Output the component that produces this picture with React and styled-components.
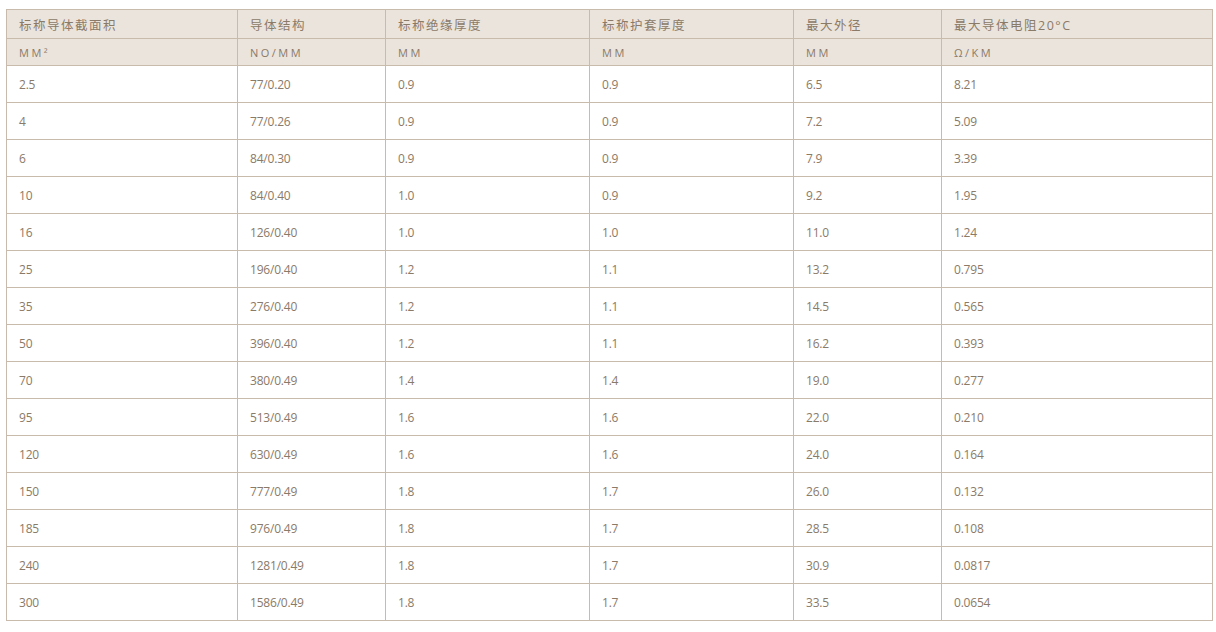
import React from "react";
import styled, { createGlobalStyle } from "styled-components";

const GlobalStyle = createGlobalStyle`
  body {
    margin: 0;
    background: #fff;
    font-family: "Open Sans", "Noto Sans CJK SC", sans-serif;
  }
`;

const columns = [
  { title: "标称导体截面积", unit: "MM²", width: 231 },
  { title: "导体结构", unit: "NO/MM", width: 148 },
  { title: "标称绝缘厚度", unit: "MM", width: 204 },
  { title: "标称护套厚度", unit: "MM", width: 204 },
  { title: "最大外径", unit: "MM", width: 148 },
  { title: "最大导体电阻20°C", unit: "Ω/KM", width: 271 },
];

const rows = [
  ["2.5", "77/0.20", "0.9", "0.9", "6.5", "8.21"],
  ["4", "77/0.26", "0.9", "0.9", "7.2", "5.09"],
  ["6", "84/0.30", "0.9", "0.9", "7.9", "3.39"],
  ["10", "84/0.40", "1.0", "0.9", "9.2", "1.95"],
  ["16", "126/0.40", "1.0", "1.0", "11.0", "1.24"],
  ["25", "196/0.40", "1.2", "1.1", "13.2", "0.795"],
  ["35", "276/0.40", "1.2", "1.1", "14.5", "0.565"],
  ["50", "396/0.40", "1.2", "1.1", "16.2", "0.393"],
  ["70", "380/0.49", "1.4", "1.4", "19.0", "0.277"],
  ["95", "513/0.49", "1.6", "1.6", "22.0", "0.210"],
  ["120", "630/0.49", "1.6", "1.6", "24.0", "0.164"],
  ["150", "777/0.49", "1.8", "1.7", "26.0", "0.132"],
  ["185", "976/0.49", "1.8", "1.7", "28.5", "0.108"],
  ["240", "1281/0.49", "1.8", "1.7", "30.9", "0.0817"],
  ["300", "1586/0.49", "1.8", "1.7", "33.5", "0.0654"],
];

const Page = styled.div`
  padding: 9px 0 0 6px;
`;

const Table = styled.table`
  width: 1206px;
  table-layout: fixed;
  border-collapse: collapse;
  color: #8a7a68;
`;

const HeadCell = styled.th`
  height: ${p => (p.$unit ? 26 : 28)}px;
  padding: 0 12px;
  background: #ebe4dd;
  border: 1px solid #c9bbac;
  text-align: left;
  font-weight: normal;
  font-size: ${p => (p.$unit ? 11 : 12.5)}px;
  letter-spacing: ${p => (p.$unit ? 2.5 : 1.5)}px;
  white-space: nowrap;
`;

const Cell = styled.td`
  height: 36px;
  padding: 0 12px;
  border: 1px solid #c9bbac;
  font-size: 12px;
  letter-spacing: -0.2px;
`;

export default function App() {
  return (
    <Page>
      <GlobalStyle />
      <Table>
        <colgroup>
          {columns.map(c => (
            <col key={c.title} style={{ width: c.width }} />
          ))}
        </colgroup>
        <thead>
          <tr>
            {columns.map(c => (
              <HeadCell key={c.title}>{c.title}</HeadCell>
            ))}
          </tr>
          <tr>
            {columns.map(c => (
              <HeadCell key={c.title} $unit>{c.unit}</HeadCell>
            ))}
          </tr>
        </thead>
        <tbody>
          {rows.map(r => (
            <tr key={r[0]}>
              {r.map((v, i) => (
                <Cell key={i}>{v}</Cell>
              ))}
            </tr>
          ))}
        </tbody>
      </Table>
    </Page>
  );
}
